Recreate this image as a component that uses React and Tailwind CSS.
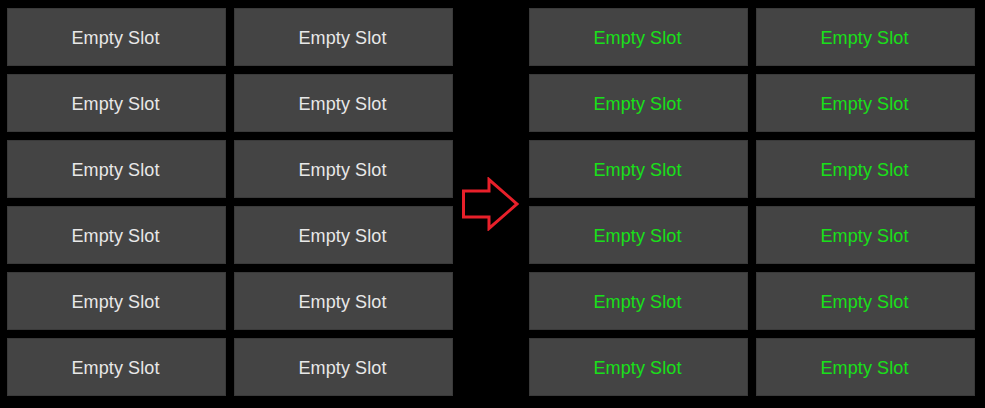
import React from "react";

const rows = [0, 1, 2, 3, 4, 5];

function Cell({ green }) {
  return (
    <div
      className={`w-[219px] h-[58px] bg-[#444444] border border-[#3a3a3a] flex items-center justify-center pt-[2px] pr-[2px] text-[18px] tracking-[0.1px] ${
        green ? "text-[#19e019]" : "text-[#e8e8e8]"
      }`}
      style={{ fontFamily: '"Liberation Sans", Arial, sans-serif' }}
    >
      Empty Slot
    </div>
  );
}

function Grid({ green, gapX }) {
  return (
    <div className="flex flex-col gap-[8px]">
      {rows.map((r) => (
        <div key={r} className={`flex ${gapX}`}>
          <Cell green={green} />
          <Cell green={green} />
        </div>
      ))}
    </div>
  );
}

export default function App() {
  return (
    <div className="w-[985px] h-[408px] bg-black flex pt-[8px] pl-[7px]">
      <Grid green={false} gapX="gap-[8px]" />
      <div className="w-[76px] flex items-center justify-center pb-[8px]">
        <svg width="60" height="54" viewBox="0 0 60 54">
          <path
            d="M2.5 14 L28 14 L28 2.5 L56 27 L28 51.5 L28 40 L2.5 40 Z"
            fill="none"
            stroke="#e8202a"
            strokeWidth="3"
            strokeLinejoin="miter"
          />
        </svg>
      </div>
      <Grid green={true} gapX="gap-[8px]" />
    </div>
  );
}
